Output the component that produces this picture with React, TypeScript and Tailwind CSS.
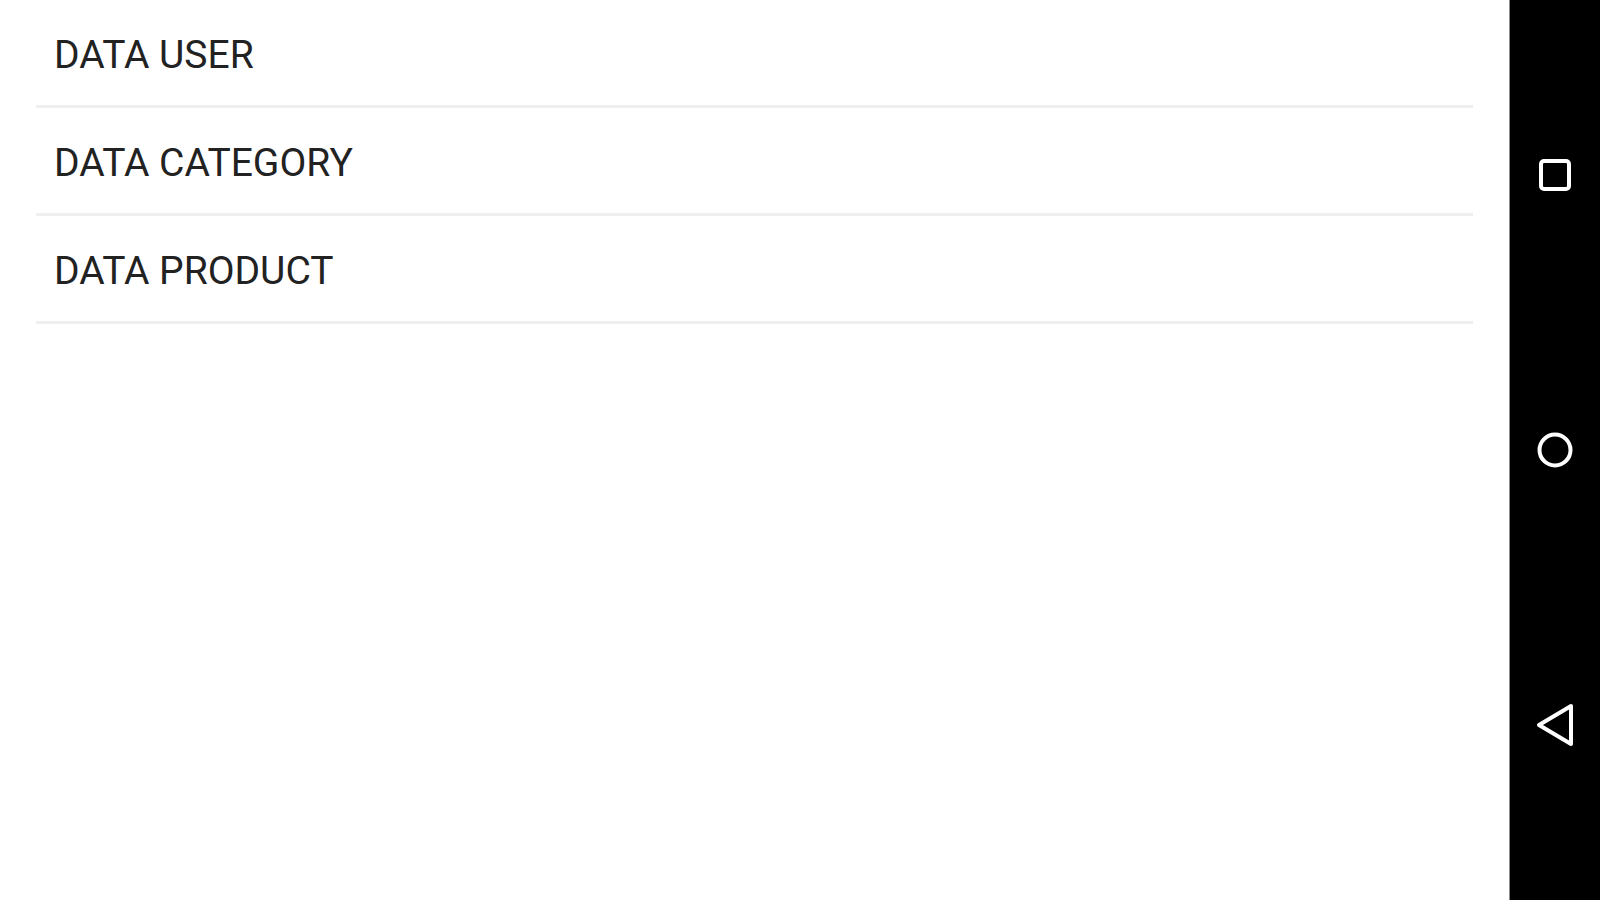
import React from "react"

const items = ["DATA USER", "DATA CATEGORY", "DATA PRODUCT"]

const App: React.FC = () => {
  return (
    <div className="flex h-[900px] w-[1600px] overflow-hidden bg-white">
      <div className="flex-1 px-[36px]">
        {items.map((label) => (
          <div
            key={label}
            className="flex h-[108px] items-center border-b-[3px] border-[#efefef] pl-[18px] pt-[6px]"
            style={{ fontFamily: "Roboto, 'Noto Sans', sans-serif" }}>
            <span className="text-[39px] leading-none text-[#222222]">{label}</span>
          </div>
        ))}
      </div>
      <div className="flex w-[91px] flex-col items-center justify-center gap-[235px] border-l border-[#8a8a8a] bg-black">
        <div className="flex h-[40px] w-[40px] items-center justify-center">
          <svg width="32" height="32" viewBox="0 0 32 32" fill="none">
            <rect x="2" y="2" width="28" height="28" rx="3" stroke="white" strokeWidth="4" />
          </svg>
        </div>
        <div className="flex h-[40px] w-[40px] items-center justify-center">
          <svg width="36" height="36" viewBox="0 0 36 36" fill="none">
            <circle cx="18" cy="18" r="15.5" stroke="white" strokeWidth="4" />
          </svg>
        </div>
        <div className="flex h-[40px] w-[40px] items-center justify-center">
          <svg width="38" height="44" viewBox="0 0 38 44" fill="none">
            <path d="M35 3 L3 22 L35 41 Z" stroke="white" strokeWidth="4" strokeLinejoin="round" />
          </svg>
        </div>
      </div>
    </div>
  )
}

export default App
